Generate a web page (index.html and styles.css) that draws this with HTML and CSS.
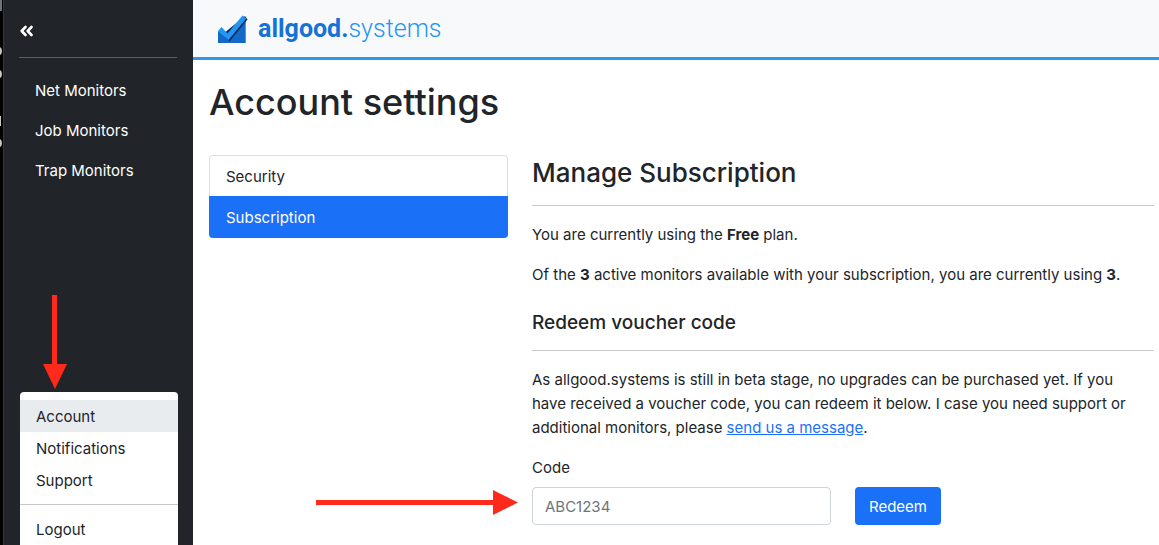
FILE: index.html
```
<!DOCTYPE html>
<html lang="en">

<head>
    <meta charset="UTF-8">
    <title>Account settings - allgood.systems</title>
    <link rel="stylesheet" href="styles.css">
</head>

<body>
    <div id="wrap">
        <svg class="edge" width="4" viewBox="0 0 4 545" preserveAspectRatio="xMinYMin slice" aria-hidden="true">
            <path fill="#6c757d" d="M0 0h2v11h-2z"/>
            <path fill="#c8c8c8" d="M0 47q2 1 2 4t-2 4zM0 70q2 1 2 4t-2 4zM0 116h1v10h-1zM0 139q2 1 2 4t-2 4z"/>
        </svg>
        <aside id="sidebar">
            <button class="toggle" type="button" aria-label="Collapse menu">
                <svg width="14" height="12" viewBox="0 0 14 12">
                    <path d="M5.500 2L1.700 6L5.500 10M11.500 2L7.700 6L11.500 10" fill="none" stroke="#fff" stroke-width="2.600" stroke-linecap="round" stroke-linejoin="round"/>
                </svg>
            </button>
            <hr>
            <nav class="monitors">
                <a href="#">Net Monitors</a>
                <a href="#">Job Monitors</a>
                <a href="#">Trap Monitors</a>
            </nav>
            <div class="dropdown">
                <svg class="arrow-down" width="24" height="94" viewBox="0 0 24 94" aria-hidden="true">
                    <path fill="#ff2a1c" d="M9 0h5v69h10L12 94L0 69h9z"/>
                </svg>
                <a class="active" href="#">Account</a>
                <a href="#">Notifications</a>
                <a href="#">Support</a>
                <hr>
                <a href="#">Logout</a>
            </div>
        </aside>
        <div id="page">
            <header id="top">
                <a class="brand" href="#">
                    <svg width="31" height="30" viewBox="0 0 31 30" aria-hidden="true">
                        <path fill="#1468c8" d="M1 17L11 24L28.700 6V29H1z"/>
                        <path fill="#0b2b58" d="M6 20L28 2L30.500 5.500L12.500 27.500z"/>
                        <path fill="#2196f3" d="M1 17L4.500 13L10.500 19.500L25.500 1.500L29.300 4.500L11.500 26z"/>
                    </svg>
                    <span class="name"><b>allgood.</b>systems</span>
                </a>
            </header>
            <main>
                <h1>Account settings</h1>
                <div class="row">
                    <nav class="list">
                        <a href="#">Security</a>
                        <a class="active" href="#">Subscription</a>
                    </nav>
                    <section class="content">
                        <h2>Manage Subscription</h2>
                        <hr>
                        <p>You are currently using the <b>Free</b> plan.</p>
                        <p>Of the <b>3</b> active monitors available with your subscription, you are currently using <b>3</b>.</p>
                        <h3>Redeem voucher code</h3>
                        <hr>
                        <p>As allgood.systems is still in beta stage, no upgrades can be purchased yet. If you have received a voucher code, you can redeem it below. I case you need support or additional monitors, please <a href="#">send us a message</a>.</p>
                        <form>
                            <label for="code">Code</label>
                            <div class="field">
                                <input id="code" type="text" placeholder="ABC1234">
                                <svg class="arrow-right" width="202" height="25" viewBox="0 0 202 25" aria-hidden="true">
                                    <path fill="#ff2a1c" d="M0 10h177V0L202 12.500L177 25V15H0z"/>
                                </svg>
                            </div>
                            <button class="btn" type="button">Redeem</button>
                        </form>
                    </section>
                </div>
            </main>
        </div>
    </div>
</body>

</html>
```
FILE: styles.css
```
* {
    box-sizing: border-box;
}

body {
    margin: 0;
    font-size: 15px;
    line-height: 24px;
    font-family: Inter, "Liberation Sans", sans-serif;
    color: #212529;
    background: #fff;
}

a {
    text-decoration: none;
}

hr {
    height: 1px;
    margin: 16px 0;
    border: 0;
    background: #c7c8c9;
}

b {
    font-weight: 700;
}

#wrap {
    display: flex;
    min-height: 100vh;
}

.edge {
    flex: none;
    height: 100vh;
    background: #000;
    border-right: 1px solid #34383c;
}

#sidebar {
    position: relative;
    flex: none;
    width: 189px;
    height: 100vh;
    padding: 16px 16px 0 15px;
    background: #212529;
    overflow: hidden;
}

#sidebar > hr {
    margin: 11px 0 12px;
    background: #5c5f63;
}

.toggle {
    display: flex;
    align-items: center;
    height: 30px;
    padding: 0 1px;
    border: 0;
    background: none;
}

.monitors a {
    display: block;
    padding: 9px 16px 7px;
    color: #fff;
}

.dropdown {
    position: absolute;
    left: 16px;
    right: 15px;
    bottom: -8px;
    padding: 8px 0;
    border-radius: 4px;
    background: #fff;
}

.dropdown a {
    display: block;
    padding: 5px 16px 3px;
    color: #212529;
}

.dropdown .active {
    background: #e9ecef;
}

.dropdown hr {
    margin: 8px 0;
}

.arrow-down {
    position: absolute;
    left: 23px;
    bottom: 100%;
    margin-bottom: 3px;
}

#page {
    flex: 1;
    min-width: 0;
}

#top {
    height: 60px;
    padding: 0 24px;
    border-bottom: 3px solid #3096ee;
    background: #f8f9fb;
}

.brand {
    display: flex;
    align-items: center;
    gap: 10px;
    height: 57px;
}

.name {
    font-family: Roboto, "Liberation Sans", sans-serif;
    font-size: 25px;
    font-weight: 300;
    color: #2196f3;
}

.name b {
    color: #1672d6;
}

main {
    padding: 18px 5px 16px 16px;
}

h1,
h2,
h3 {
    margin: 0;
    font-weight: 500;
}

h1 {
    margin-bottom: 29px;
    font-size: 36px;
    line-height: 48px;
}

h2 {
    font-size: 26px;
    line-height: 36px;
}

h2 + hr {
    margin: 14px 0 17px;
}

h3 {
    margin-top: 24px;
    font-size: 19px;
    line-height: 24px;
}

.row {
    display: grid;
    grid-template-columns: repeat(3, 1fr);
    align-items: start;
    gap: 24px;
}

.list {
    border: 1px solid #dcddde;
    border-radius: 4px;
}

.list a {
    display: block;
    padding: 9px 16px 7px;
    color: #212529;
}

.list .active {
    margin: 0 -1px -1px;
    padding: 10px 17px 8px;
    border-radius: 0 0 4px 4px;
    color: #fff;
    background: #1b70f8;
}

.content {
    grid-column: span 2;
}

h3 + hr {
    margin: 15px 0 17px;
}

p {
    margin: 0 0 16px;
    padding-right: 16px;
}

p a {
    color: #1b70f8;
    text-decoration: underline;
}

form {
    display: grid;
    grid-template-columns: 1fr 1fr;
    column-gap: 24px;
    row-gap: 7px;
}

label {
    grid-column: span 2;
}

.field {
    position: relative;
}

input {
    display: block;
    width: 100%;
    height: 38px;
    padding: 6px 12px;
    border: 1px solid #ced4da;
    border-radius: 4px;
    font: inherit;
    background: #fff;
}

input::placeholder {
    color: #6c757d;
}

.arrow-right {
    position: absolute;
    top: 3px;
    right: 100%;
    margin-right: 14px;
}

.btn {
    justify-self: start;
    height: 38px;
    padding: 7px 14px 5px;
    border: 0;
    border-radius: 4px;
    font: inherit;
    color: #fff;
    background: #1b70f8;
}
```
